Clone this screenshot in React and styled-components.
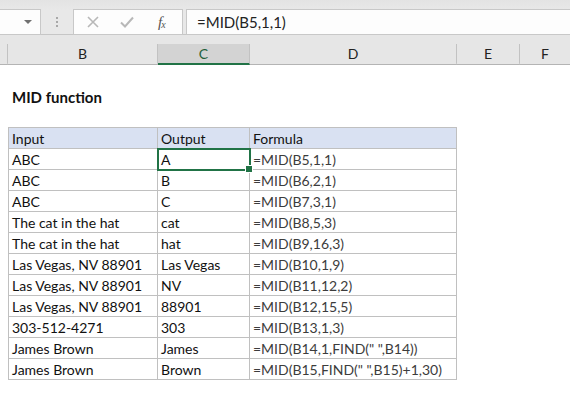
import React from 'react';
import styled, { createGlobalStyle } from 'styled-components';

const GlobalStyle = createGlobalStyle`
  html, body {
    margin: 0;
    padding: 0;
    background: #ffffff;
  }
  body {
    font-family: Lato, 'Liberation Sans', sans-serif;
    width: 570px;
    height: 400px;
    overflow: hidden;
  }
`;

const COLS = '8px 150px 92px 207px 63px 1fr';

const rows = [
  ['ABC', 'A', '=MID(B5,1,1)'],
  ['ABC', 'B', '=MID(B6,2,1)'],
  ['ABC', 'C', '=MID(B7,3,1)'],
  ['The cat in the hat', 'cat', '=MID(B8,5,3)'],
  ['The cat in the hat', 'hat', '=MID(B9,16,3)'],
  ['Las Vegas, NV 88901', 'Las Vegas', '=MID(B10,1,9)'],
  ['Las Vegas, NV 88901', 'NV', '=MID(B11,12,2)'],
  ['Las Vegas, NV 88901', '88901', '=MID(B12,15,5)'],
  ['303-512-4271', '303', '=MID(B13,1,3)'],
  ['James Brown', 'James', '=MID(B14,1,FIND(" ",B14))'],
  ['James Brown', 'Brown', '=MID(B15,FIND(" ",B15)+1,30)'],
];

const App = () => {
  return (
    <>
      <GlobalStyle />
      <Window>
        <FormulaBar>
          <NameBox>
            <Caret />
          </NameBox>
          <Grip>
            <span />
            <span />
            <span />
          </Grip>
          <BarButtons>
            <svg width="12" height="12" viewBox="0 0 12 12">
              <path d="M1 1 L11 11 M11 1 L1 11" stroke="#b8b8b8" strokeWidth="1.6" fill="none" />
            </svg>
            <svg width="14" height="12" viewBox="0 0 14 12">
              <path d="M1 6.5 L5 10.5 L13 1.5" stroke="#b8b8b8" strokeWidth="2" fill="none" />
            </svg>
            <Fx>
              f<sub>x</sub>
            </Fx>
          </BarButtons>
          <FormulaInput>=MID(B5,1,1)</FormulaInput>
        </FormulaBar>

        <ColumnHeaders>
          <ColHead $edge />
          <ColHead>B</ColHead>
          <ColHead $selected>C</ColHead>
          <ColHead>D</ColHead>
          <ColHead>E</ColHead>
          <ColHead $last>F</ColHead>
        </ColumnHeaders>

        <Sheet>
          <SheetRow />
          <SheetRow>
            <span />
            <Title>MID function</Title>
          </SheetRow>
          <SheetRow />
          <SheetRow>
            <span />
            <Cell $header $first>Input</Cell>
            <Cell $header>Output</Cell>
            <Cell $header>Formula</Cell>
          </SheetRow>
          {rows.map((r, i) => (
            <SheetRow key={i}>
              <span />
              <Cell $first>{r[0]}</Cell>
              <Cell $active={i === 0}>
                {r[1]}
                {i === 0 && <Handle />}
              </Cell>
              <Cell $formula>{r[2]}</Cell>
            </SheetRow>
          ))}
        </Sheet>
      </Window>
    </>
  );
};

const Window = styled.div`
  width: 570px;
  height: 400px;
  display: flex;
  flex-direction: column;
  background: #ffffff;
`;

const FormulaBar = styled.div`
  height: 35px;
  box-sizing: border-box;
  background: linear-gradient(#e3e3e3, #e8e8e8 30%, #e8e8e8);
  border-bottom: 1px solid #c6c6c6;
  display: flex;
  align-items: flex-start;
  padding-top: 9px;
`;

const NameBox = styled.div`
  width: 41px;
  height: 26px;
  box-sizing: border-box;
  background: #fdfdfd;
  border: 1px solid #c8c8c8;
  border-left: none;
  position: relative;
`;

const Caret = styled.div`
  position: absolute;
  right: 8px;
  top: 10px;
  width: 0;
  height: 0;
  border-left: 4px solid transparent;
  border-right: 4px solid transparent;
  border-top: 4px solid #707070;
`;

const Grip = styled.div`
  width: 32px;
  height: 26px;
  display: flex;
  flex-direction: column;
  align-items: center;
  justify-content: center;
  gap: 2px;

  span {
    width: 2px;
    height: 2px;
    background: #a8a8a8;
  }
`;

const BarButtons = styled.div`
  width: 110px;
  height: 26px;
  box-sizing: border-box;
  background: #fdfdfd;
  border: 1px solid #c8c8c8;
  display: flex;
  align-items: center;
  padding-left: 13px;
  gap: 21px;
`;

const Fx = styled.span`
  font-family: 'Liberation Serif', serif;
  font-style: italic;
  font-size: 15px;
  color: #555555;
  letter-spacing: -1px;
  margin-left: 3px;

  sub {
    font-size: 10px;
    vertical-align: -1px;
  }
`;

const FormulaInput = styled.div`
  flex: 1;
  height: 26px;
  box-sizing: border-box;
  margin-left: 3px;
  background: #fdfdfd;
  border: 1px solid #c8c8c8;
  border-right: none;
  padding-left: 10px;
  font-size: 15px;
  line-height: 24px;
  color: #222222;
`;

const ColumnHeaders = styled.div`
  display: grid;
  grid-template-columns: ${COLS};
  height: 30px;
  box-sizing: border-box;
  background: #e6e6e6;
  border-bottom: 1px solid #b4b4b4;
  padding-top: 9px;
`;

const ColHead = styled.div`
  box-sizing: border-box;
  border-right: ${(p) => (p.$last ? 'none' : '1px solid #c2c2c2')};
  background: ${(p) => (p.$selected ? '#d3d3d3' : 'transparent')};
  border-bottom: ${(p) => (p.$selected ? '2px solid #217346' : '2px solid transparent')};
  text-align: center;
  font-size: 14px;
  line-height: 19px;
  color: ${(p) => (p.$selected ? '#1f5f3a' : '#222222')};
  margin-bottom: -1px;
`;

const Sheet = styled.div`
  display: flex;
  flex-direction: column;
`;

const SheetRow = styled.div`
  display: grid;
  grid-template-columns: ${COLS};
  height: 21px;
`;

const Title = styled.div`
  grid-column: 2 / 4;
  font-weight: 700;
  font-size: 15px;
  line-height: 22px;
  padding-left: 4px;
  color: #111111;
`;

const Cell = styled.div`
  position: relative;
  box-sizing: border-box;
  border-right: 1px solid #c0c0c0;
  border-bottom: 1px solid #c0c0c0;
  border-left: ${(p) => (p.$first ? '1px solid #c0c0c0' : 'none')};
  border-top: ${(p) => (p.$header ? '1px solid #c0c0c0' : 'none')};
  margin-top: ${(p) => (p.$header ? '-1px' : '0')};
  height: ${(p) => (p.$header ? '22px' : '21px')};
  background: ${(p) => (p.$header ? '#d9e1f2' : '#ffffff')};
  padding-left: 3px;
  font-size: 14px;
  line-height: 21px;
  white-space: nowrap;
  color: ${(p) => (p.$formula ? '#3c3c3c' : '#111111')};
  outline: ${(p) => (p.$active ? '2px solid #217346' : 'none')};
  outline-offset: -1px;
  z-index: ${(p) => (p.$active ? 1 : 0)};
`;

const Handle = styled.span`
  position: absolute;
  right: -4px;
  bottom: -4px;
  width: 6px;
  height: 6px;
  background: #217346;
  border: 1px solid #ffffff;
`;

export default App;
